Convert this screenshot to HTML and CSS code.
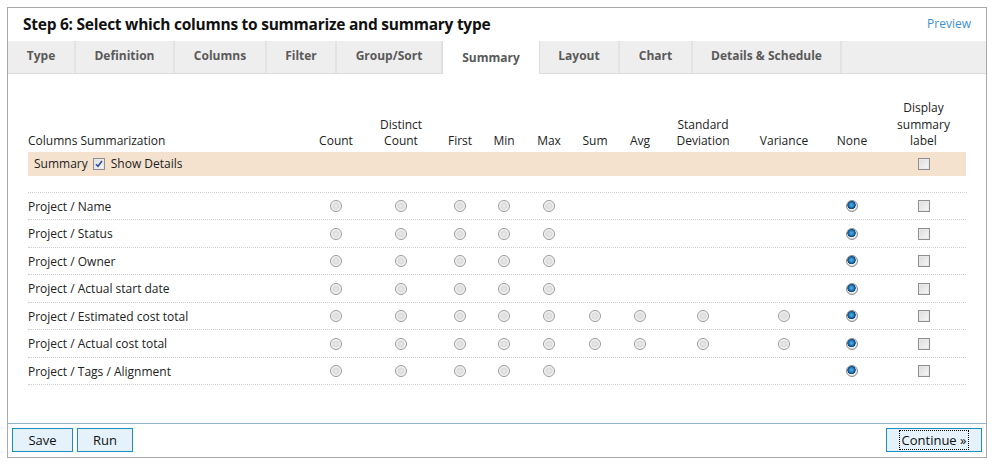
FILE: index.html
```html
<!DOCTYPE html>
<html>
<head>
<meta charset="utf-8">
<link rel="stylesheet" href="styles.css">
</head>
<body>
<div class="panel">
  <div class="header">
    <h1 class="title">Step 6: Select which columns to summarize and summary type</h1>
    <a class="preview" href="#">Preview</a>
  </div>
  <div class="tabs">
    <div class="tab t1">Type</div>
    <div class="tab t2">Definition</div>
    <div class="tab t3">Columns</div>
    <div class="tab t4">Filter</div>
    <div class="tab t5">Group/Sort</div>
    <div class="tab t6 active">Summary</div>
    <div class="tab t7">Layout</div>
    <div class="tab t8">Chart</div>
    <div class="tab t9">Details &amp; Schedule</div>
  </div>
  <div class="content">
    <div class="grid head">
      <div class="c first">Columns Summarization</div>
      <div class="c">Count</div>
      <div class="c">Distinct<br>Count</div>
      <div class="c">First</div>
      <div class="c">Min</div>
      <div class="c">Max</div>
      <div class="c">Sum</div>
      <div class="c">Avg</div>
      <div class="c">Standard<br>Deviation</div>
      <div class="c">Variance</div>
      <div class="c">None</div>
      <div class="c last">Display<br>summary<br>label</div>
    </div>
    <div class="grid summary">
      <div class="c first sumlabel">Summary <span class="cb checked"><svg width="8" height="8" viewBox="0 0 8 8"><path d="M1 4.2 L3 6.3 L7 1" fill="none" stroke="#2d4f9e" stroke-width="1.6"/></svg></span> Show Details</div>
      <div class="c"></div><div class="c"></div><div class="c"></div><div class="c"></div><div class="c"></div>
      <div class="c"></div><div class="c"></div><div class="c"></div><div class="c"></div><div class="c"></div>
      <div class="c last"><span class="cb"></span></div>
    </div>
    <div class="rows">
      <div class="grid row">
        <div class="c first">Project / Name</div>
        <div class="c"><span class="rd"></span></div><div class="c"><span class="rd"></span></div><div class="c"><span class="rd"></span></div><div class="c"><span class="rd"></span></div><div class="c"><span class="rd"></span></div>
        <div class="c"></div><div class="c"></div><div class="c"></div><div class="c"></div>
        <div class="c"><span class="rd on"></span></div><div class="c last"><span class="cb"></span></div>
      </div>
      <div class="grid row">
        <div class="c first">Project / Status</div>
        <div class="c"><span class="rd"></span></div><div class="c"><span class="rd"></span></div><div class="c"><span class="rd"></span></div><div class="c"><span class="rd"></span></div><div class="c"><span class="rd"></span></div>
        <div class="c"></div><div class="c"></div><div class="c"></div><div class="c"></div>
        <div class="c"><span class="rd on"></span></div><div class="c last"><span class="cb"></span></div>
      </div>
      <div class="grid row">
        <div class="c first">Project / Owner</div>
        <div class="c"><span class="rd"></span></div><div class="c"><span class="rd"></span></div><div class="c"><span class="rd"></span></div><div class="c"><span class="rd"></span></div><div class="c"><span class="rd"></span></div>
        <div class="c"></div><div class="c"></div><div class="c"></div><div class="c"></div>
        <div class="c"><span class="rd on"></span></div><div class="c last"><span class="cb"></span></div>
      </div>
      <div class="grid row">
        <div class="c first">Project / Actual start date</div>
        <div class="c"><span class="rd"></span></div><div class="c"><span class="rd"></span></div><div class="c"><span class="rd"></span></div><div class="c"><span class="rd"></span></div><div class="c"><span class="rd"></span></div>
        <div class="c"></div><div class="c"></div><div class="c"></div><div class="c"></div>
        <div class="c"><span class="rd on"></span></div><div class="c last"><span class="cb"></span></div>
      </div>
      <div class="grid row">
        <div class="c first">Project / Estimated cost total</div>
        <div class="c"><span class="rd"></span></div><div class="c"><span class="rd"></span></div><div class="c"><span class="rd"></span></div><div class="c"><span class="rd"></span></div><div class="c"><span class="rd"></span></div>
        <div class="c"><span class="rd"></span></div><div class="c"><span class="rd"></span></div><div class="c"><span class="rd"></span></div><div class="c"><span class="rd"></span></div>
        <div class="c"><span class="rd on"></span></div><div class="c last"><span class="cb"></span></div>
      </div>
      <div class="grid row">
        <div class="c first">Project / Actual cost total</div>
        <div class="c"><span class="rd"></span></div><div class="c"><span class="rd"></span></div><div class="c"><span class="rd"></span></div><div class="c"><span class="rd"></span></div><div class="c"><span class="rd"></span></div>
        <div class="c"><span class="rd"></span></div><div class="c"><span class="rd"></span></div><div class="c"><span class="rd"></span></div><div class="c"><span class="rd"></span></div>
        <div class="c"><span class="rd on"></span></div><div class="c last"><span class="cb"></span></div>
      </div>
      <div class="grid row">
        <div class="c first">Project / Tags / Alignment</div>
        <div class="c"><span class="rd"></span></div><div class="c"><span class="rd"></span></div><div class="c"><span class="rd"></span></div><div class="c"><span class="rd"></span></div><div class="c"><span class="rd"></span></div>
        <div class="c"></div><div class="c"></div><div class="c"></div><div class="c"></div>
        <div class="c"><span class="rd on"></span></div><div class="c last"><span class="cb"></span></div>
      </div>
    </div>
  </div>
  <div class="footer">
    <button class="btn save">Save</button>
    <button class="btn run">Run</button>
    <span class="spacer"></span>
    <button class="btn cont"><span class="focus">Continue »</span></button>
  </div>
</div>
</body>
</html>
```

FILE: styles.css
```css
* { box-sizing: border-box; }
html, body { margin: 0; padding: 0; background: #fff; }
body {
  font-family: "Open Sans", "DejaVu Sans", sans-serif;
  font-size: 12px;
  color: #222;
}
.panel {
  margin: 7px 0 0 7px;
  width: 980px;
  height: 451px;
  border: 1px solid #aaa;
  display: flex;
  flex-direction: column;
}
.header {
  height: 33px;
  display: flex;
  align-items: center;
  justify-content: space-between;
  padding: 0 15px 0 15px;
}
.title {
  margin: 0;
  font-size: 15.5px;
  font-weight: 700;
  color: #111;
  letter-spacing: -0.25px;
  margin-top: -1px;
}
.preview {
  color: #3d8fd3;
  text-decoration: none;
  font-size: 12px;
  margin-top: -3px;
}
.tabs {
  display: flex;
  height: 33px;
  background: #eee;
  border-bottom: 1px solid #ddd;
}
.tab {
  height: 32px;
  line-height: 30px;
  text-align: center;
  font-weight: 700;
  font-size: 12px;
  color: #5a5a5a;
  border-right: 2px solid #e3e3e3;
}
.t1 { width: 68px; }
.t2 { width: 99px; }
.t3 { width: 92px; }
.t4 { width: 70px; }
.t5 { width: 106px; }
.t6 { width: 97px; }
.t7 { width: 80px; }
.t8 { width: 73px; }
.t9 { width: 149px; }
.tab.active {
  background: #fff;
  height: 33px;
  line-height: 34px;
  border-left: 1px solid #ddd;
  border-right: 1px solid #ddd;
  margin-left: -1px;
  width: 98px;
}
.content {
  flex: 1;
  padding: 26px 19px 0 20px;
}
.grid {
  display: grid;
  grid-template-columns: 277px 62px 68px 50px 38px 52px 40px 50px 76px 86px 50px 89px;
  width: 938px;
}
.c {
  text-align: center;
  display: flex;
  align-items: center;
  justify-content: center;
}
.c.last { padding-left: 4px; }
.c.first { justify-content: flex-start; text-align: left; }
.head { line-height: 16.5px; color: #222; }
.head .c { align-items: flex-end; }
.summary {
  margin-top: 2px;
  height: 24px;
  background: #f4e2cf;
}
.sumlabel { padding-left: 6px; }
.sumlabel .cb { margin: 0 6px 0 5px; }
.rows {
  margin-top: 16px;
  border-top: 1px dotted #ccc;
}
.row {
  height: 27.5px;
  border-bottom: 1px dotted #ccc;
  padding-top: 1px;
}
.rd {
  display: inline-block;
  width: 12px;
  height: 12px;
  border-radius: 50%;
  border: 1px solid #999;
  background: radial-gradient(circle at 50% 50%, #e9e9e9 0, #dcdcdc 40%, #f9f9f9 68%, #cfcfcf 100%);
}
.rd.on {
  background: radial-gradient(circle at 45% 40%, #5ab7e8 0, #1a6fb0 35%, #0d3f73 48%, #f2f2f2 55%, #d8d8d8 75%, #f5f5f5 100%);
  border-color: #8c8c8c;
}
.cb {
  display: inline-flex;
  align-items: center;
  justify-content: center;
  width: 12px;
  height: 12px;
  border: 1px solid #8f8f8f;
  background: linear-gradient(135deg, #dcdcdc, #f7f7f7);
  box-shadow: inset 0 0 0 1px #e8e8e8;
}
.cb svg { display: block; }
.footer {
  height: 34px;
  border-top: 1px solid #8fb4cf;
  display: flex;
  align-items: center;
  padding: 0 4px 2px 4px;
  gap: 4px;
}
.spacer { flex: 1; }
.btn {
  height: 24px;
  background: #e5f1fb;
  border: 1px solid #1a8cc6;
  font-family: "Open Sans", "DejaVu Sans", sans-serif;
  font-size: 13px;
  color: #111;
  padding: 0;
  margin: 0;
}
.save { width: 61px; }
.run { width: 56px; }
.cont { width: 96px; }
.focus {
  border: 1px dotted #000;
  padding: 0 2px;
  line-height: 18px;
  display: inline-block;
}
```
